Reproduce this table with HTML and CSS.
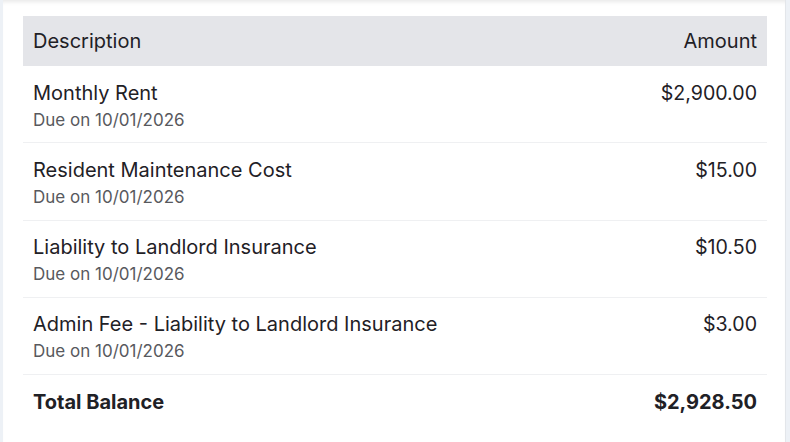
FILE: index.html
```
<!DOCTYPE html>
<html lang="en">
<head>
    <meta charset="UTF-8">
    <meta name="viewport" content="width=device-width, initial-scale=1.0">
    <title>Balance</title>
    <link rel="stylesheet" href="styles.css">
</head>
<body>
    <div class="card">
        <div class="charges">
            <div class="charges-head">
                <span>Description</span>
                <span>Amount</span>
            </div>

            <div class="charge-row">
                <div class="charge-info">
                    <div class="charge-name">Monthly Rent</div>
                    <div class="charge-due">Due on 10/01/2026</div>
                </div>
                <div class="charge-amount">$2,900.00</div>
            </div>
            <div class="charge-row">
                <div class="charge-info">
                    <div class="charge-name">Resident Maintenance Cost</div>
                    <div class="charge-due">Due on 10/01/2026</div>
                </div>
                <div class="charge-amount">$15.00</div>
            </div>
            <div class="charge-row">
                <div class="charge-info">
                    <div class="charge-name">Liability to Landlord Insurance</div>
                    <div class="charge-due">Due on 10/01/2026</div>
                </div>
                <div class="charge-amount">$10.50</div>
            </div>
            <div class="charge-row">
                <div class="charge-info">
                    <div class="charge-name">Admin Fee - Liability to Landlord Insurance</div>
                    <div class="charge-due">Due on 10/01/2026</div>
                </div>
                <div class="charge-amount">$3.00</div>
            </div>

            <!-- total -->
            <div class="charge-total">
                <span>Total Balance</span>
                <span class="total-amount">$2,928.50</span>
            </div>
        </div>
    </div>
</body>
</html>
```

FILE: styles.css
```
body {
    margin: 0;
    background: #edf1f6;
    font-family: 'Inter', 'Liberation Sans', sans-serif;
    color: #1f2126;
}

.card {
    margin-left: 3px;
    width: 783px;
    min-height: 442px;
    background: white;
    box-shadow: inset 0 5px 4px -3px rgba(0,0,0,0.09);
    padding: 16px 18px 0 20px;
    box-sizing: border-box;
    border-right: 1px solid #e3e6ea;
}

.charges-head {
    display: flex;
    justify-content: space-between;
    align-items: center;
    height: 50px;
    padding: 0 10px;
    background: #e4e5e9;
    font-size: 20px;
}

.charge-row {
    display: flex;
    justify-content: space-between;
    align-items: flex-start;
    padding: 13.5px 10px 0 10px;
    height: 62.8px;
    border-bottom: 1px solid #eff0f2;
}

.charge-name,
.charge-amount {
    font-size: 20px;
    line-height: 26px;
}

.charge-amount {
    font-size: 19.6px;
}

.charge-due {
    margin-top: 1px;
    font-size: 17px;
    line-height: 26px;
    color: #58595e;
}

.charge-total {
    display: flex;
    justify-content: space-between;
    align-items: center;
    padding: 14px 10px;
    font-size: 20px;
    line-height: 26px;
    font-weight: bold;
}

.total-amount {
    font-size: 20px;
}
```
